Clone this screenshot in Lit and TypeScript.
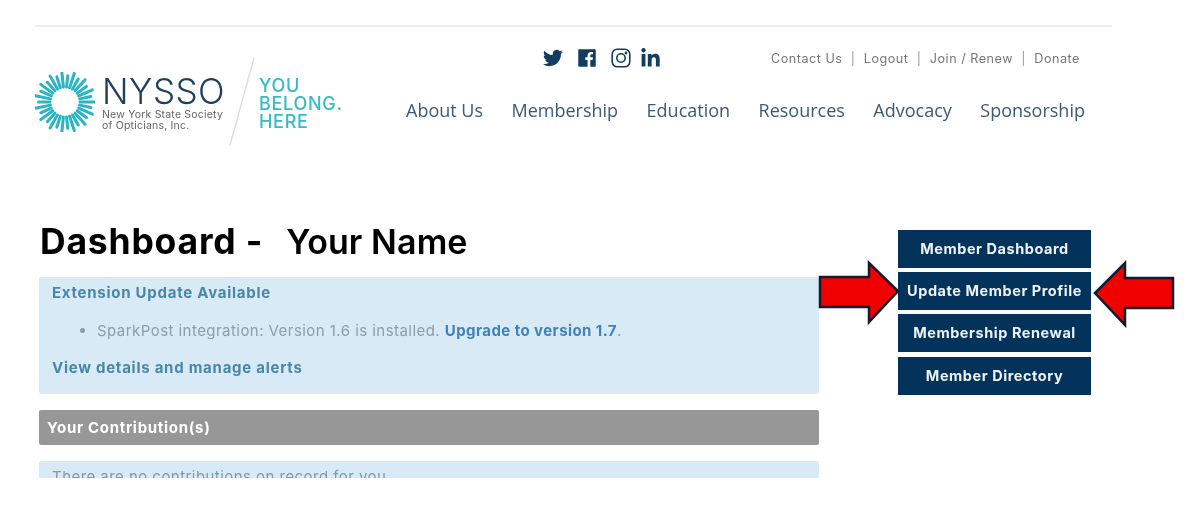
import { LitElement, html, css, svg } from "lit";
import { customElement } from "lit/decorators.js";

const rays = Array.from({ length: 30 }, (_, i) => {
  const a = (i / 30) * Math.PI * 2;
  const r = i % 2 ? 26.5 : 30;
  return { x1: 30 + Math.cos(a) * 15, y1: 30 + Math.sin(a) * 15, x2: 30 + Math.cos(a) * r, y2: 30 + Math.sin(a) * r };
});

@customElement("app-root")
export class AppRoot extends LitElement {
  static styles = css`
    :host { display: block; position: relative; width: 1200px; height: 512px; overflow: hidden; background: #fff; font-family: Inter, "Liberation Sans", sans-serif; filter: blur(0.4px); }
    .page { padding: 25px 88px 0 35px; }
    .rule { height: 2px; background: #eeeeee; }
    header { display: flex; justify-content: space-between; height: 118px; }
    .logo { display: flex; align-items: center; margin-top: 30px; height: 90px; }
    .sun { width: 60px; height: 60px; margin-right: 7px; flex: none; }
    .brand { display: flex; flex-direction: column; width: 125px; }
    .brand b { font-weight: 300; font-size: 35px; line-height: 34px; color: #1d3f60; letter-spacing: 0.5px; margin-top: 1px; }
    .brand small { font-size: 10.5px; line-height: 11px; color: #666; margin-top: 1px; letter-spacing: 0.2px; white-space: nowrap; }
    .slash { width: 26px; height: 90px; margin-left: 2px; flex: none; }
    .tag { font-size: 18px; line-height: 18px; font-weight: 500; color: #36bac8; margin: 4px 0 0 4px; letter-spacing: 0.7px; }
    .right { display: flex; flex-direction: column; width: 679px; margin-right: 27px; }
    .top { display: flex; align-items: center; height: 34px; margin-top: 14px; }
    .social { display: flex; align-items: center; margin-left: 136px; width: 122px; gap: 13px; color: #123d60; }
    .social svg { display: block; fill: currentColor; }
    .social .fb { margin-left: 1px; }
    .social .ig { margin-left: 2px; }
    .social .in { margin-left: -3px; }
    .links { display: flex; gap: 8.3px; margin-left: 107px; font-size: 12.6px; letter-spacing: 0.52px; color: #777; white-space: nowrap; }
    .links .sep { color: #999; }
    .nav { display: flex; justify-content: space-between; margin-top: 23px; font-family: "Open Sans", sans-serif; font-size: 18px; line-height: 24px; color: #3a5a78; white-space: nowrap; }
    main { display: grid; grid-template-columns: 780px 193px; column-gap: 79px; margin: 85px 0 0 4px; height: 248px; width: 1052px; }
    .title { display: flex; align-items: center; height: 44px; margin: -10px 0 13px 1px; color: #000; white-space: nowrap; }
    h1 { margin: 0; font-size: 35.5px; line-height: 44px; font-weight: 700; letter-spacing: 0.8px; }
    .name { margin-left: 23px; font-size: 34px; line-height: 44px; font-weight: 600; letter-spacing: 0.1px; }
    .alert { background: #d8eaf6; border-radius: 3px; padding: 6px 13px; color: #8b9ea9; font-size: 15px; letter-spacing: 0.45px; box-sizing: border-box; }
    .a1 { height: 117px; }
    .alert p { margin: 0; line-height: 19px; }
    .alert ul { margin: 19px 0 18px; padding-left: 45px; line-height: 19px; }
    .strong { color: #4a86a8; font-weight: 700; letter-spacing: 0.74px; }
    .up { color: #3f83b8; font-weight: 700; letter-spacing: 0.43px; }
    .bar { background: #979797; color: #fff; font-size: 15px; font-weight: 700; letter-spacing: 0.7px; height: 35px; line-height: 35px; padding-left: 8px; margin: 16px 0; border-radius: 2px; }
    .a2 { height: 17px; overflow: hidden; color: #7d9ab0; border-radius: 3px 3px 0 0; }
    aside { display: flex; flex-direction: column; gap: 4.2px; }
    aside a { display: block; height: 38px; line-height: 37px; background: #03335a; color: #eef3f7; text-align: center; font-size: 14.5px; font-weight: 700; letter-spacing: 0.55px; white-space: nowrap; }
    .arrow { position: absolute; top: 260px; width: 86px; height: 68px; }
    .al { left: 816px; }
    .ar { left: 1091px; }
    .arrow polygon { fill: #f10000; stroke: #141a30; stroke-width: 2.5; stroke-linejoin: miter; }
  `;

  render() {
    return html`
      <div class="page">
        <div class="rule"></div>
        <header>
          <div class="logo">
            <svg class="sun" viewBox="0 0 60 60" fill="none" stroke="#2bb5c4" stroke-width="3" stroke-linecap="round">
              ${rays.map((r) => svg`<line x1=${r.x1} y1=${r.y1} x2=${r.x2} y2=${r.y2}></line>`)}
            </svg>
            <div class="brand"><b>NYSSO</b><small>New York State Society<br />of Opticians, Inc.</small></div>
            <svg class="slash" viewBox="0 0 26 90" fill="none" stroke="#dddddd" stroke-width="1.4"><line x1="25" y1="1" x2="1" y2="88"></line></svg>
            <div class="tag">YOU<br />BELONG.<br />HERE</div>
          </div>
          <div class="right">
            <div class="top">
              <div class="social">
                <svg width="22" height="20" viewBox="0 0 24 24"><path d="M23.953 4.57a10 10 0 01-2.825.775 4.958 4.958 0 002.163-2.723c-.951.555-2.005.959-3.127 1.184a4.92 4.92 0 00-8.384 4.482C7.69 8.095 4.067 6.13 1.64 3.162a4.822 4.822 0 00-.666 2.475c0 1.71.87 3.213 2.188 4.096a4.904 4.904 0 01-2.228-.616v.06a4.923 4.923 0 003.946 4.827 4.996 4.996 0 01-2.212.085 4.936 4.936 0 004.604 3.417 9.867 9.867 0 01-6.102 2.105c-.39 0-.779-.023-1.17-.067a13.995 13.995 0 007.557 2.209c9.053 0 13.998-7.496 13.998-13.985 0-.21 0-.42-.015-.63A9.935 9.935 0 0024 4.59z"></path></svg>
                <svg class="fb" width="18" height="20" viewBox="0 0 448 512"><path d="M448 56.7v398.5c0 13.7-11.1 24.7-24.7 24.7H309.1V306.5h58.2l8.7-67.6h-67v-43.2c0-19.6 5.4-32.9 33.5-32.9h35.8v-60.5c-6.2-.8-27.4-2.7-52.2-2.7-51.6 0-87 31.5-87 89.4v49.9h-58.4v67.6h58.4V480H24.7C11.1 480 0 468.9 0 455.3V56.7C0 43.1 11.1 32 24.7 32h398.5c13.7 0 24.8 11.1 24.8 24.7z"></path></svg>
                <svg class="ig" width="20" height="20" viewBox="0 0 20 20" style="fill:none" stroke="currentColor" stroke-width="1.6"><rect x="1.2" y="1.2" width="17.6" height="17.6" rx="5"></rect><circle cx="10" cy="10" r="4.2"></circle><circle cx="15" cy="5" r="0.6"></circle></svg>
                <svg class="in" width="19" height="21" viewBox="0 0 448 512"><path d="M100.28 448H7.4V148.9h92.88zM53.79 108.1C24.09 108.1 0 83.5 0 53.8a53.79 53.79 0 0 1 107.58 0c0 29.7-24.1 54.3-53.79 54.3zM447.9 448h-92.68V302.4c0-34.7-.7-79.2-48.29-79.2-48.29 0-55.69 37.7-55.69 76.7V448h-92.78V148.9h89.08v40.8h1.3c12.4-23.5 42.69-48.3 87.88-48.3 94 0 111.28 61.9 111.28 142.3V448z"></path></svg>
              </div>
              <div class="links"><span>Contact Us</span><span class="sep">|</span><span>Logout</span><span class="sep">|</span><span>Join / Renew</span><span class="sep">|</span><span>Donate</span></div>
            </div>
            <nav class="nav"><span>About Us</span><span>Membership</span><span>Education</span><span>Resources</span><span>Advocacy</span><span>Sponsorship</span></nav>
          </div>
        </header>
        <main>
          <section>
            <div class="title"><h1>Dashboard -</h1><span class="name">Your Name</span></div>
            <div class="alert a1">
              <p class="strong">Extension Update Available</p>
              <ul><li>SparkPost integration: Version 1.6 is installed. <span class="up">Upgrade to version 1.7</span>.</li></ul>
              <p class="strong">View details and manage alerts</p>
            </div>
            <div class="bar">Your Contribution(s)</div>
            <div class="alert a2"><p>There are no contributions on record for you.</p></div>
          </section>
          <aside>
            <a>Member Dashboard</a>
            <a>Update Member Profile</a>
            <a>Membership Renewal</a>
            <a>Member Directory</a>
          </aside>
        </main>
      </div>
      <svg class="arrow al" viewBox="0 0 86 68"><polygon points="4,17 53,17 53,3 82,31 53,62 53,47 4,47"></polygon></svg>
      <svg class="arrow ar" viewBox="0 0 86 68"><polygon points="82,18 34,18 34,3 4,33 34,65 34,48 82,48"></polygon></svg>
    `;
  }
}
